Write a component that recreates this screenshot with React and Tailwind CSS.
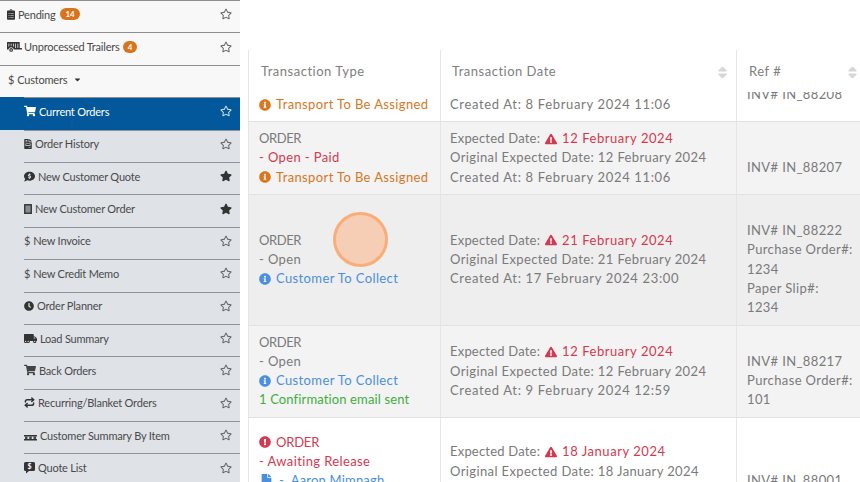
import React from "react";
import {
  FaClipboardList, FaTrailer, FaShoppingCart, FaFileInvoice, FaCommentDollar, FaClock, FaTruckMoving,
  FaRegStar, FaStar, FaInfoCircle, FaExclamationTriangle, FaExclamationCircle, FaFile, FaSort, FaCaretDown,
} from "react-icons/fa";
import { Repeat } from "lucide-react";

function QuoteIcon() {
  return (
    <svg width="11" height="12" viewBox="0 0 11 12" className="shrink-0">
      <path d="M1.5 0h8A1.5 1.5 0 0 1 11 1.5v6A1.5 1.5 0 0 1 9.500 9H5l-3 2.500V9H1.500A1.500 1.500 0 0 1 0 7.500v-6A1.500 1.500 0 0 1 1.500 0z" fill="#333" />
      <text x="5.500" y="7" fontSize="7" fill="#fff" textAnchor="middle" fontWeight="700">$</text>
    </svg>
  );
}

function BookIcon() {
  return (
    <svg width="8" height="10" viewBox="0 0 8 10" className="shrink-0">
      <rect width="8" height="10" rx="0.5" fill="#3a3a3a" />
      <rect x="1.500" y="1.500" width="5" height="7" fill="#8a8c90" />
    </svg>
  );
}

function PalletIcon() {
  return (
    <svg width="13" height="12" viewBox="0 0 13 12" className="shrink-0">
      <rect x="0" y="6" width="13" height="1.500" fill="#333" />
      <rect x="0" y="10" width="13" height="1.500" fill="#333" />
      <rect x="1" y="7.500" width="2.500" height="2.500" fill="#444" />
      <rect x="5.250" y="7.500" width="2.500" height="2.500" fill="#444" />
      <rect x="9.500" y="7.500" width="2.500" height="2.500" fill="#444" />
    </svg>
  );
}

const Dollar = () => <span className="shrink-0">$</span>;

const top = [
  { icon: <FaClipboardList className="shrink-0 text-[#333] w-[8px] h-[11px]" />, label: "Pending", badge: "14", gap: "gap-[3px]", bx: "px-[6px]" },
  { icon: <FaTrailer size={15} className="shrink-0 text-[#333]" />, label: "Unprocessed Trailers", badge: "4", gap: "gap-[2px]", bx: "px-[5px]" },
];

const subs = [
  { icon: <FaShoppingCart size={12} className="shrink-0" />, label: "Current Orders", active: true },
  { icon: <FaFileInvoice className="shrink-0 text-[#333] w-[8px] h-[10px]" />, label: "Order History" },
  { icon: <FaCommentDollar size={11} className="shrink-0 text-[#333]" />, label: "New Customer Quote", star: true },
  { icon: <BookIcon />, label: "New Customer Order", star: true },
  { icon: <Dollar />, label: "New Invoice" },
  { icon: <Dollar />, label: "New Credit Memo" },
  { icon: <FaClock size={10} className="shrink-0 text-[#333]" />, label: "Order Planner" },
  { icon: <FaTruckMoving size={13} className="shrink-0 text-[#333]" />, label: "Load Summary" },
  { icon: <FaShoppingCart size={12} className="shrink-0 text-[#444]" />, label: "Back Orders" },
  { icon: <Repeat size={11} strokeWidth={3.2} className="shrink-0 text-[#333]" />, label: "Recurring/Blanket Orders" },
  { icon: <PalletIcon />, label: "Customer Summary By Item" },
  { icon: <QuoteIcon />, label: "Quote List" },
];

function Star({ on, light }) {
  const c = "shrink-0 mr-[8px] " + (light ? "text-[#cfe0ee]" : on ? "text-[#333]" : "text-[#666]");
  return on ? <FaStar size={12} className={c} /> : <FaRegStar size={12} className={c} />;
}

function Sidebar() {
  return (
    <div className="w-[240px] shrink-0 bg-[#f8f8f8] text-[11px] leading-none text-[#4a4a4a] tracking-[-0.2px]">
      {top.map((t) => (
        <div key={t.label} className="h-[32.4px] border-t border-[#8e8e8e] flex items-center pl-[7px] pb-[5px]">
          <div className={"flex-1 flex items-center " + t.gap}>
            {t.icon}
            <span>{t.label}</span>
            <span className={"ml-[1px] rounded-full bg-[#d9731c] text-white text-[8px] font-bold h-[12px] flex items-center " + t.bx}>{t.badge}</span>
          </div>
          <Star />
        </div>
      ))}
      <div className="h-[32.4px] border-t border-[#8e8e8e] flex items-center pl-[8px] gap-[3px] pb-[4px]">
        <Dollar />
        <span>Customers</span>
        <FaCaretDown size={9} className="ml-[3px] text-[#333]" />
      </div>
      <div className="bg-[#dfe2e7]">
        {subs.map((s) => (
          <div key={s.label} className={"h-[32.4px] " + (s.active ? "bg-[#02589a] text-white" : "")}>
            <div className={"h-full ml-6 flex items-center border-t pb-[5px] " + (s.active ? "border-[#8e8e8e]" : "border-[#8e9299]")}>
              <div className="flex-1 flex items-center gap-[3px]">
                {s.icon}
                <span>{s.label}</span>
              </div>
              <Star on={s.star} light={s.active} />
            </div>
          </div>
        ))}
      </div>
    </div>
  );
}

const O = "text-[#d9771e]";
const B = "text-[#4a8fe0]";
const R = "text-[#d4394f]";

function Line({ children, className = "" }) {
  return <div className={"h-[19.3px] flex items-center whitespace-nowrap " + className}>{children}</div>;
}

function Transport() {
  return (
    <Line className={O + " gap-[5px]"}><FaInfoCircle size={12} className="shrink-0" /><span>Transport To Be Assigned</span></Line>
  );
}
function Collect() {
  return (
    <Line className={B + " gap-[5px]"}><FaInfoCircle size={12} className="shrink-0" /><span>Customer To Collect</span></Line>
  );
}
function Created({ children }) {
  return <Line className="tracking-[0.66px]">{children}</Line>;
}
function Dates({ exp, orig, created }) {
  return (
    <>
      <Line className="gap-[5px]"><span className="tracking-[0.2px]">Expected Date:</span><FaExclamationTriangle size={12} className={R + " shrink-0"} /><span className={R + " tracking-[0.55px]"}>{exp}</span></Line>
      <Line>Original Expected Date: {orig}</Line>
      <Created>{created}</Created>
    </>
  );
}
const Order = () => <Line className="tracking-[-0.4px]">ORDER</Line>;

const rows = [
  {
    h: "h-[72.4px] -mt-[42px] bg-white",
    a: <><Line /><Line /><Transport /></>,
    b: <><Line /><Line /><Created>Created At: 8 February 2024 11:06</Created></>,
    c: <><Line /><Line className="relative bottom-[1px]">INV# IN_88208</Line></>,
  },
  {
    h: "h-[72.4px] bg-[#f3f3f3]",
    a: <><Order /><Line className={R}>- Open - Paid</Line><Transport /></>,
    b: <Dates exp="12 February 2024" orig="12 February 2024" created="Created At: 8 February 2024 11:06" />,
    c: <><Line /><Line>INV# IN_88207</Line></>,
  },
  {
    h: "h-[131px] bg-[#eeeeee]",
    a: <><Order /><Line>- Open</Line><Collect /></>,
    b: <Dates exp="21 February 2024" orig="21 February 2024" created="Created At: 17 February 2024 23:00" />,
    c: <><Line /><Line>INV# IN_88222</Line><Line>Purchase Order#:</Line><Line>1234</Line><Line>Paper Slip#:</Line><Line>1234</Line></>,
  },
  {
    h: "h-[92px] bg-[#f3f3f3]",
    a: <><Order /><Line>- Open</Line><Collect /><Line className="text-[#3fae3f] tracking-[0.13px]">1 Confirmation email sent</Line></>,
    b: <Dates exp="12 February 2024" orig="12 February 2024" created="Created At: 9 February 2024 12:59" />,
    c: <><Line /><Line>INV# IN_88217</Line><Line>Purchase Order#:</Line><Line>101</Line></>,
  },
  {
    h: "h-[108px] bg-white",
    a: <>
      <Line className={R + " gap-[5px]"}><FaExclamationCircle size={12} className="shrink-0" /><span className="tracking-[-0.2px]">ORDER</span></Line>
      <Line className={R}>- Awaiting Release</Line>
      <Line className={B + " gap-[5px] tracking-[0.2px]"}><FaFile className="shrink-0 w-[15px] h-[13px]" /><span>- &nbsp;Aaron Mimnagh</span></Line>
      <Line />
    </>,
    b: <Dates exp="18 January 2024" orig="18 January 2024" created="Created At: 5 January 2024 09:12" />,
    c: <><Line /><Line>INV# IN_88001</Line></>,
  },
];

function Header({ w, label, sort, cls }) {
  return (
    <div className={w + " shrink-0 h-full flex items-center justify-between border-l border-[#e6e6e6] pt-[2px] text-[#808080] tracking-[0.5px] " + cls}>
      <span className="whitespace-nowrap">{label}</span>
      {sort && <FaSort size={15} className="text-[#d6d6d6] shrink-0" />}
    </div>
  );
}

function Table() {
  return (
    <div className="flex-1 ml-[8px] pt-[50px] h-full flex flex-col text-[13px] text-[#7a7a7a] tracking-[0.38px] overflow-hidden">
      <div className="h-[42px] flex shrink-0 bg-white relative z-10">
        <Header w="w-[192px]" cls="pl-[12px]" label="Transaction Type" />
        <Header w="w-[296px]" cls="pl-[11px] pr-[6px]" label="Transaction Date" sort />
        <Header w="w-[124px]" cls="pl-[12px]" label="Ref #" sort />
      </div>
      <div className="flex-1 min-h-0">
        {rows.map((r, i) => (
          <div key={i} className={"flex border-b border-[#e2e2e2] " + r.h}>
            <div className="w-[192px] shrink-0 border-l border-[#e6e6e6] pl-[10px] flex flex-col justify-center">{r.a}</div>
            <div className="w-[296px] shrink-0 border-l border-[#e6e6e6] pl-[9px] flex flex-col justify-center">{r.b}</div>
            <div className="w-[124px] shrink-0 border-l border-[#e6e6e6] pl-[10px] flex flex-col justify-center">{r.c}</div>
          </div>
        ))}
      </div>
    </div>
  );
}

export default function App() {
  return (
    <div className="relative flex w-[860px] h-[482px] overflow-hidden bg-white font-['Lato',sans-serif]">
      <Sidebar />
      <Table />
      <div className="absolute left-[333px] top-[212px] w-[55px] h-[55px] rounded-full border-[3px] border-[#f9ae78] bg-[#f6cdb5] z-20" />
    </div>
  );
}
